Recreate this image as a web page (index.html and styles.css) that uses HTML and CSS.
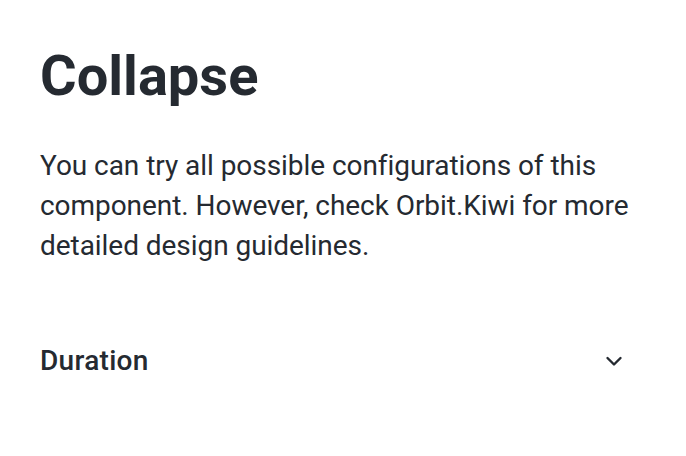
FILE: index.html
```html
<!DOCTYPE html>
<html>
<head>
<meta charset="utf-8">
<link rel="stylesheet" href="styles.css">
</head>
<body>
<main class="page">
  <h1 class="title">Collapse</h1>
  <p class="intro">You can try all possible configurations of this component. However, check Orbit.Kiwi for more detailed design guidelines.</p>
  <div class="collapse">
    <div class="collapse-head">
      <span class="collapse-label">Duration</span>
      <svg class="chevron" width="24" height="24" viewBox="0 0 24 24"><path d="M5.5 9 L12 15.5 L18.5 9" fill="none" stroke="#252a31" stroke-width="2.4" stroke-linecap="round" stroke-linejoin="round"/></svg>
    </div>
  </div>
</main>
</body>
</html>
```
FILE: styles.css
```css
html, body { margin: 0; padding: 0; background: #fff; }
body { font-family: Roboto, "Liberation Sans", sans-serif; color: #252a31; }
.page { padding: 40px 40px 0 40px; width: 606px; }
.title { margin: 0; font-size: 56px; font-weight: 700; line-height: 72px; }
.intro { margin: 34px 0 0 0; font-size: 28px; line-height: 40px; letter-spacing: -0.05px; }
.collapse { margin-top: 75px; }
.collapse-head { display: flex; align-items: center; justify-content: space-between; height: 40px; }
.collapse-label { font-size: 28px; font-weight: 500; line-height: 40px; letter-spacing: 0.3px; }
.chevron { display: block; margin-right: 20px; }
```
